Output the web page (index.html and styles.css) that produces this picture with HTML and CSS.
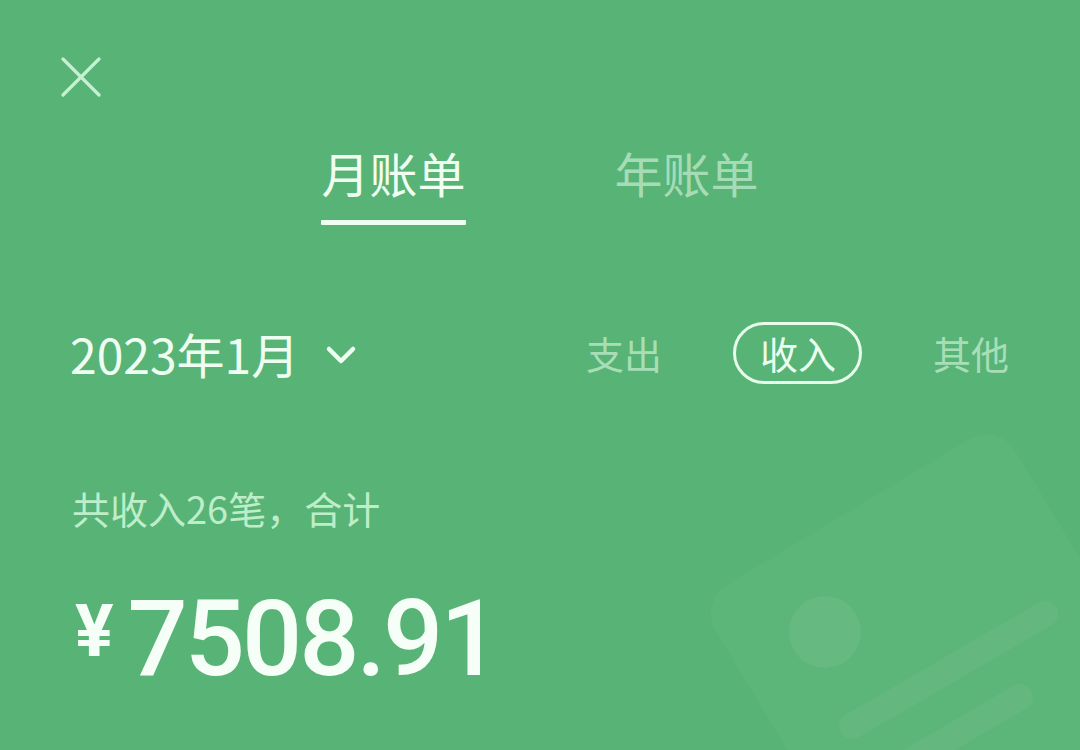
FILE: index.html
```html
<!DOCTYPE html>
<html lang="zh-CN">
<head>
<meta charset="utf-8">
<title>月账单</title>
<link rel="stylesheet" href="styles.css">
</head>
<body>
<div class="page">
  <svg class="deco" width="1080" height="750" viewBox="0 0 1080 750" aria-hidden="true">
    <g transform="translate(698,602) rotate(-31)">
      <rect x="0" y="0" width="350" height="420" rx="34" fill="#ffffff" fill-opacity="0.028"/>
    </g>
    <circle cx="825" cy="632" r="36" fill="#ffffff" fill-opacity="0.065"/>
    <line x1="852" y1="726" x2="1045" y2="614" stroke="#ffffff" stroke-opacity="0.05" stroke-width="26" stroke-linecap="round"/>
    <line x1="905" y1="764" x2="1020" y2="697" stroke="#ffffff" stroke-opacity="0.05" stroke-width="26" stroke-linecap="round"/>
  </svg>

  <div class="content">
    <header class="top">
      <button class="close" type="button" aria-label="关闭">
        <svg width="40" height="40" viewBox="0 0 40 40">
          <path d="M2 2 L38 38 M38 2 L2 38" stroke="#c6f1d0" stroke-width="3.2" stroke-linecap="round" fill="none"/>
        </svg>
      </button>
    </header>

    <nav class="tabs">
      <span class="tab active">月账单</span>
      <span class="tab">年账单</span>
    </nav>

    <div class="filter-row">
      <div class="month">
        <span>2023年1月</span>
        <svg class="chev" width="32" height="22" viewBox="0 0 32 22">
          <path d="M4 5 L16 17 L28 5" stroke="#eefff2" stroke-width="4.5" stroke-linecap="round" stroke-linejoin="round" fill="none"/>
        </svg>
      </div>
      <div class="types">
        <span class="type">支出</span>
        <span class="type selected">收入</span>
        <span class="type">其他</span>
      </div>
    </div>

    <p class="summary">共收入26笔，合计</p>

    <div class="amount">
      <span class="yen">¥</span>
      <span class="num">7508.91</span>
    </div>
  </div>
</div>
</body>
</html>
```

FILE: styles.css
```css
* { box-sizing: border-box; }

html, body {
  margin: 0;
  padding: 0;
}

body {
  width: 1080px;
  height: 750px;
  overflow: hidden;
  background: #58b376;
  font-family: "Noto Sans CJK SC", "Noto Sans", sans-serif;
}

.page {
  position: relative;
  width: 1080px;
  height: 750px;
  overflow: hidden;
  background: #58b376;
}

.deco {
  position: absolute;
  left: 0;
  top: 0;
  z-index: 0;
}

.content {
  position: relative;
  z-index: 1;
  display: flex;
  flex-direction: column;
}

.top {
  display: flex;
  padding: 57px 0 0 61px;
  height: 97px;
}

.close {
  width: 40px;
  height: 40px;
  padding: 0;
  margin: 0;
  border: 0;
  background: none;
  display: block;
}
.close svg { display: block; }

.tabs {
  margin-top: 51px;
  display: flex;
  justify-content: center;
  gap: 143px;
}

.tab {
  display: flex;
  flex-direction: column;
  align-items: center;
  font-size: 48px;
  line-height: 48px;
  color: #a6dcb5;
  padding: 0 3px;
}

.tab::after {
  content: "";
  display: block;
  width: 100%;
  height: 5px;
  margin-top: 24px;
  border-radius: 1px;
  background: transparent;
}

.tab.active { color: #f0fff2; }
.tab.active::after { background: #eefff1; }

.filter-row {
  margin-top: 97px;
  height: 62px;
  display: flex;
  align-items: center;
  justify-content: space-between;
  padding: 0 71px 0 70px;
}

.month {
  display: flex;
  align-items: center;
  gap: 26px;
  font-size: 48px;
  line-height: 62px;
  color: #eefff2;
}

.chev { display: block; margin-top: 4px; }

.types {
  display: flex;
  align-items: center;
  gap: 71px;
}

.type {
  font-size: 38px;
  line-height: 38px;
  color: #a8deb7;
}

.type.selected {
  height: 62px;
  display: flex;
  align-items: center;
  padding: 0 23px 0 24px;
  border: 3px solid #e6fbe9;
  border-radius: 31px;
  color: #eafff0;
}

.summary {
  margin: 105px 0 0 0;
  padding-left: 72px;
  font-size: 38px;
  line-height: 38px;
  color: #bdeec9;
}

.amount {
  margin-top: 59px;
  padding-left: 75px;
  display: flex;
  align-items: flex-start;
  gap: 14px;
  color: #f5fff7;
  font-family: Roboto, "Liberation Sans", sans-serif;
}

.yen {
  margin-top: 10px;
  font-size: 72px;
  line-height: 72px;
  font-weight: 700;
}

.num {
  font-size: 106px;
  line-height: 106px;
  font-weight: 500;
  letter-spacing: -3px;
}
```
